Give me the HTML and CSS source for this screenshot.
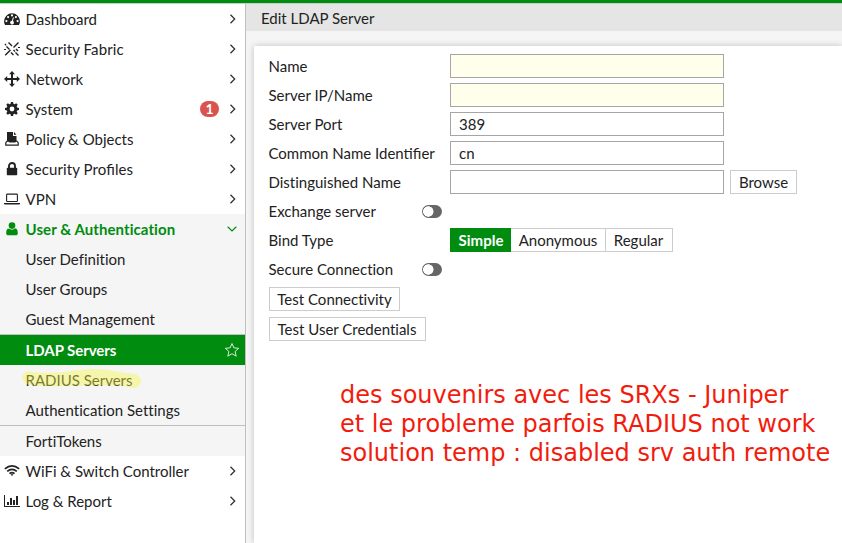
FILE: index.html
```
<!DOCTYPE html>
<html lang="en">
<head>
<meta charset="utf-8">
<title>Edit LDAP Server</title>
<link rel="stylesheet" href="styles.css">
</head>
<body>
<svg width="0" height="0" class="defs">
  <symbol id="chev" viewBox="0 0 8 10"><path d="M1.5 .7 5.7 5 1.5 9.3" fill="none" stroke="currentColor" stroke-width="1.3"/></symbol>
</svg>
<div class="app">
  <nav class="sidebar">
    <a class="item"><svg class="icon" viewBox="0 0 16 16"><path fill-rule="evenodd" d="M8 2.300a8 8 0 0 0-8 8c0 1.500.4 2.700 1.100 3.700h13.800c.7-1 1.100-2.200 1.100-3.700a8 8 0 0 0-8-8zM8 3.300a1.100 1.100 0 1 1 0 2.200 1.100 1.100 0 0 1 0-2.200zM4.100 5a1.100 1.100 0 1 1 0 2.200 1.100 1.100 0 0 1 0-2.200zM2.400 9a1.100 1.100 0 1 1 0 2.200 1.100 1.100 0 0 1 0-2.200zM13.600 9a1.100 1.100 0 1 1 0 2.200 1.100 1.100 0 0 1 0-2.200zM11.900 5a1.100 1.100 0 1 1 0 2.200 1.100 1.100 0 0 1 0-2.200zM9 6.200l.9.300-1 3.400a1.900 1.900 0 1 1-1-.2z"/></svg><span>Dashboard</span><svg class="chev"><use href="#chev"/></svg></a>
    <a class="item fabric"><svg class="icon" viewBox="0 0 16 16"><path d="M1.200 14.200 6.500 9M9.500 6.500l5-5M4.500 1.500 8 5M2.500 5.500l3 3M9.500 9l1.500 1.500M7 11.500l2.500 2.500M12 8l2 2M11.500 11.500l3 3" fill="none" stroke="currentColor" stroke-width="1.400"/><path d="M0 8.500h2M14 6.500h2M.8 2.800l1.500 1.500" fill="none" stroke="currentColor" stroke-width="1.200"/></svg><span>Security Fabric</span><svg class="chev"><use href="#chev"/></svg></a>
    <a class="item"><svg class="icon" viewBox="0 0 16 16"><path d="M8 0l3 3.200H9V7h3.800V5L16 8l-3.200 3V9H9v3.800h2L8 16l-3-3.200h2V9H3.200v2L0 8l3.200-3v2H7V3.200H5z"/></svg><span>Network</span><svg class="chev"><use href="#chev"/></svg></a>
    <a class="item"><svg class="icon" viewBox="0 0 16 16"><path fill-rule="evenodd" d="M6.900 1h2.200l.4 1.900 1.100.4 1.600-1 1.500 1.500-1 1.600.4 1.100 1.900.4v2.200l-1.900.4-.4 1.100 1 1.600-1.500 1.500-1.600-1-1.100.4-.4 1.900H6.900l-.4-1.900-1.100-.4-1.600 1-1.500-1.500 1-1.600-.4-1.100L1 9.100V6.900l1.900-.4.4-1.100-1-1.600 1.500-1.500 1.600 1 1.100-.4zM8 5.600a2.400 2.400 0 1 0 0 4.800 2.400 2.400 0 0 0 0-4.800z"/></svg><span>System</span><b class="badge">1</b><svg class="chev"><use href="#chev"/></svg></a>
    <a class="item"><svg class="icon" viewBox="0 0 16 16"><path d="M3 1h6v4h3.500v6H3z"/><path d="M10 1l2.500 2.800H10z"/><path d="M3.200 10.200h1.600l1 .8H11l.8-.8h1l1.400 1.500v2.500H1.800v-2.500z" fill="#fff" stroke="currentColor" stroke-width="1.200"/></svg><span>Policy &amp; Objects</span><svg class="chev"><use href="#chev"/></svg></a>
    <a class="item lig"><svg class="icon" viewBox="0 0 16 16"><path d="M5 7V5a3 3 0 0 1 6 0v2" fill="none" stroke="currentColor" stroke-width="1.900"/><rect x="2.800" y="6.700" width="10.400" height="7.500" rx=".8"/></svg><span>Security Profiles</span><svg class="chev"><use href="#chev"/></svg></a>
    <a class="item"><svg class="icon" viewBox="0 0 16 16"><rect x="2.600" y="3.100" width="10.800" height="7.400" rx=".8" fill="none" stroke="currentColor" stroke-width="1.100"/><path d="M0 12h16v.6q0 .9-1 .9H1q-1 0-1-.9z"/></svg><span>VPN</span><svg class="chev"><use href="#chev"/></svg></a>
    <div class="section">
      <a class="item open"><svg class="icon" viewBox="0 0 16 16"><circle cx="8" cy="4.600" r="3.300"/><path d="M5 7.300C2.900 7.600 2.200 9.500 2.200 12c0 1.400.7 2.300 2 2.300h7.600c1.300 0 2-.9 2-2.300 0-2.500-.7-4.400-2.800-4.700a4 4 0 0 1-6 0z"/></svg><span>User &amp; Authentication</span><svg class="down" viewBox="0 0 10 8"><path d="M.7 1.800 5 6 9.300 1.800" fill="none" stroke="currentColor" stroke-width="1.200"/></svg></a>
      <a class="item sub">User Definition</a>
      <a class="item sub">User Groups</a>
      <a class="item sub">Guest Management</a>
      <a class="item sub active"><span>LDAP Servers</span><svg class="star" viewBox="0 0 16 16"><path d="M8 1.500 9.900 5.900l4.800.4-3.600 3.200 1.100 4.700L8 11.700l-4.200 2.500 1.100-4.700L1.300 6.300l4.800-.4z" fill="none" stroke="currentColor"/></svg></a>
      <a class="item sub marked"><span>RADIUS Servers</span><svg class="marker" viewBox="0 0 124 22"><path d="M7 3C25 6 42 4 56 2Q79-1 98 4L115 6Q122 9 121 15 118 21 111 20L104 18C75 17 44 19 15 18L7 17Q1 15 0 9 2 3 7 3Z"/></svg></a>
      <a class="item sub">Authentication Settings</a>
      <a class="item sub tokens">FortiTokens</a>
    </div>
    <a class="item"><svg class="icon" viewBox="0 0 16 16"><path d="M.8 5.800Q8-.2 15.200 5.800M3.200 8.300q4.800-4 9.600 0M5.500 10.600q2.500-2 5 0" fill="none" stroke="currentColor" stroke-width="1.700"/><path d="m6.600 11.500 1.400 1.600 1.400-1.600q-1.400-1-2.800 0z"/></svg><span>WiFi &amp; Switch Controller</span><svg class="chev"><use href="#chev"/></svg></a>
    <a class="item"><svg class="icon" viewBox="0 0 16 16"><path d="M0 2h1v11h15v1H0zM3 9h2v3H3zM6 5h2v7H6zM9 7h2v5H9zM12 3h2v9h-2z"/></svg><span>Log &amp; Report</span><svg class="chev"><use href="#chev"/></svg></a>
  </nav>
  <main class="content">
    <header class="title">Edit LDAP Server</header>
    <section class="panel">
      <form class="form">
        <div class="row"><label>Name</label><input class="required" type="text"></div>
        <div class="row"><label>Server IP/Name</label><input class="required" type="text"></div>
        <div class="row"><label>Server Port</label><input type="text" value="389"></div>
        <div class="row"><label class="identifier">Common Name Identifier</label><input type="text" value="cn"></div>
        <div class="row"><label>Distinguished Name</label><input type="text"><button class="btn browse" type="button">Browse</button></div>
        <div class="row"><label>Exchange server</label><i class="toggle"></i></div>
        <div class="row"><label>Bind Type</label><div class="group"><button class="seg on" type="button">Simple</button><button class="seg anon" type="button">Anonymous</button><button class="seg regular" type="button">Regular</button></div></div>
        <div class="row"><label>Secure Connection</label><i class="toggle"></i></div>
        <button class="btn test" type="button">Test Connectivity</button>
        <button class="btn test wide" type="button">Test User Credentials</button>
      </form>
      <p class="note">des souvenirs avec les SRXs - Juniper<br>et le probleme parfois RADIUS not work<br>solution temp : disabled srv auth remote</p>
    </section>
  </main>
</div>
</body>
</html>
```
FILE: styles.css
```
* { box-sizing: border-box; }
body { margin: 0; font: 15px/30px Lato, sans-serif; color: #222; background: #fff; overflow: hidden; font-variant-ligatures: none; }
.defs { display: none; }
.app { display: flex; height: 543px; border-top: 3px solid #008c0f; }
.sidebar { width: 246px; flex: none; border-right: 1px solid #bfbfbf; border-top: 1px solid #ccc; background: #fff; }
.item { display: flex; align-items: center; height: 30px; padding: 0 8px 0 4px; white-space: nowrap; }
.lig, .identifier { font-variant-ligatures: normal; }
.lig, .fabric { letter-spacing: .1px; }
.lig { font-feature-settings: "liga" 1; }
.icon { width: 16px; height: 16px; margin: 0 5.500px 0 0; fill: currentColor; flex: none; }
.chev { width: 8px; height: 10px; margin: 0 0 0 auto; color: #333; }
.badge { margin: 0 10px 0 auto; width: 19px; height: 16px; border-radius: 8px; background: #d9534f; color: #fff; font-size: 14px; line-height: 16px; text-align: center; }
.badge + .chev { margin-left: 0; }
.section { background: #f5f5f5; }
.open { color: #008c0f; font-weight: bold; letter-spacing: .08px; }
.down { width: 10px; height: 8px; margin-left: auto; }
.sub { padding-left: 25.500px; }
.active { height: 31px; border-top: 1px solid #bfbfbf; padding-right: 5px; background: #008c0f; color: #fff; font-weight: bold; letter-spacing: -.05px; }
.star { width: 16px; height: 16px; margin: 0 0 0 auto; opacity: .85; }
.marked { position: relative; }
.marker { position: absolute; left: 22px; top: 3px; width: 122px; height: 22px; fill: #f8f64a; opacity: .42; }
.tokens { height: 31px; border-top: 1px solid #bfbfbf; }
.content { flex: 1; display: flex; flex-direction: column; background: #f5f5f5; border-top: 1px solid #ccc; }
.title { height: 27px; padding: 0 0 0 15px; line-height: 28px; background: #e5e5e5; }
.panel { flex: 1; margin: 15px 0 0 8px; padding: 8px 0 0 14.500px; background: #fff; box-shadow: 0 0 6px rgba(0, 0, 0, .22); }
.row { display: flex; height: 24px; margin-bottom: 5px; line-height: 24px; }
.row label { width: 181.500px; flex: none; }
input { width: 274px; height: 24px; padding: 0 8px; border: 1px solid #a6a6a6; font: 15px Lato, sans-serif; color: #222; background: #fff; }
.required { background: #ffffeb; }
button { height: 24px; padding: 0; border: 1px solid #ccc; background: #fff; font: 15px/20px Lato, sans-serif; color: #222; font-variant-ligatures: none; }
.browse { width: 67px; margin-left: 6px; }
.toggle { width: 20px; height: 13px; margin: 6px 0 0 -28px; border-radius: 7px; background: radial-gradient(circle at 6.300px 6.500px, #fff 4.900px, #666 5.500px); }
.group { display: flex; }
.on { width: 61px; padding-left: 1px; border-color: #008c0f; background: #008c0f; color: #fff; font-weight: bold; }
.anon { width: 95px; border-left: 0; }
.regular { width: 67px; border-left: 0; padding-right: 1px; }
.test { display: block; width: 131px; margin: 6px 0 6px .5px; }
.wide { width: 157px; padding-right: 1px; }
.note { margin: 40px 0 0 71.500px; font: 24px/29px "DejaVu Sans", sans-serif; color: #f21c0d; white-space: nowrap; }
```
